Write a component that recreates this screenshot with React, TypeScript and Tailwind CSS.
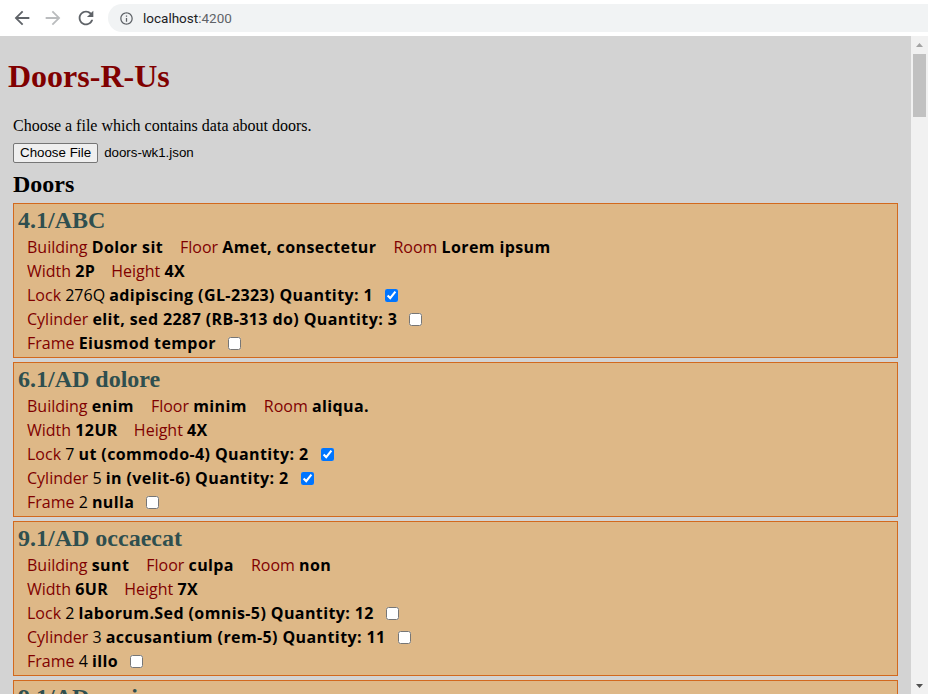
import React from "react";

// Datos de ejemplo de puertas
type Part = { num: string; name: string; code?: string; qty?: number; ok: boolean };
type Door = {
  id: string;
  building: string;
  floor: string;
  room: string;
  width: string;
  height: string;
  lock: Part;
  cylinder: Part;
  frame: Part;
};

const doors: Door[] = [
  {
    id: "4.1/ABC",
    building: "Dolor sit",
    floor: "Amet, consectetur",
    room: "Lorem ipsum",
    width: "2P",
    height: "4X",
    lock: { num: "276Q", name: "adipiscing", code: "GL-2323", qty: 1, ok: true },
    cylinder: { num: "", name: "elit, sed 2287", code: "RB-313 do", qty: 3, ok: false },
    frame: { num: "", name: "Eiusmod tempor", ok: false },
  },
  {
    id: "6.1/AD dolore",
    building: "enim",
    floor: "minim",
    room: "aliqua.",
    width: "12UR",
    height: "4X",
    lock: { num: "7", name: "ut", code: "commodo-4", qty: 2, ok: true },
    cylinder: { num: "5", name: "in", code: "velit-6", qty: 2, ok: true },
    frame: { num: "2", name: "nulla", ok: false },
  },
  {
    id: "9.1/AD occaecat",
    building: "sunt",
    floor: "culpa",
    room: "non",
    width: "6UR",
    height: "7X",
    lock: { num: "2", name: "laborum.Sed", code: "omnis-5", qty: 12, ok: false },
    cylinder: { num: "3", name: "accusantium", code: "rem-5", qty: 11, ok: false },
    frame: { num: "4", name: "illo", ok: false },
  },
  {
    id: "9.1/AD veniam",
    building: "quis",
    floor: "nostrud",
    room: "exercitation",
    width: "3P",
    height: "5X",
    lock: { num: "1", name: "ullamco", code: "GL-11", qty: 4, ok: false },
    cylinder: { num: "2", name: "laboris", code: "RB-2", qty: 4, ok: false },
    frame: { num: "1", name: "nisi", ok: false },
  },
];

function Label({ children }: { children: React.ReactNode }) {
  return <span className="text-[#800000]">{children}</span>;
}

function Val({ children }: { children: React.ReactNode }) {
  return <b className="tracking-[0.4px]">{children}</b>;
}

function PartRow({ label, part }: { label: string; part: Part }) {
  return (
    <div className="leading-[24px] whitespace-nowrap">
      <Label>{label}</Label> {part.num && <span>{part.num} </span>}
      <Val>
        {part.name}
        {part.code && ` (${part.code}) Quantity: ${part.qty}`}
      </Val>
      <input
        type="checkbox"
        defaultChecked={part.ok}
        className="ml-[12px] w-[13px] h-[13px] align-[-1px]"
      />
    </div>
  );
}

function DoorCard({ door }: { door: Door }) {
  return (
    <div className="border border-[#d2691e] bg-[#deb887] px-[4px] pt-[2px] pb-[2px] mb-[4px]">
      <h3 className="font-['Liberation_Serif',serif] font-bold text-[24px] leading-[28px] text-[#2f4f4f]">
        {door.id}
      </h3>
      <div className="mt-[1px] pl-[9px] text-[16px] text-black font-['Open_Sans','Noto_Sans',sans-serif]">
        <div className="flex gap-x-[17px] leading-[24px] whitespace-nowrap">
          <span>
            <Label>Building</Label> <Val>{door.building}</Val>
          </span>
          <span>
            <Label>Floor</Label> <Val>{door.floor}</Val>
          </span>
          <span>
            <Label>Room</Label> <Val>{door.room}</Val>
          </span>
        </div>
        <div className="flex gap-x-[16px] leading-[24px] whitespace-nowrap">
          <span>
            <Label>Width</Label> <Val>{door.width}</Val>
          </span>
          <span>
            <Label>Height</Label> <Val>{door.height}</Val>
          </span>
        </div>
        <PartRow label="Lock" part={door.lock} />
        <PartRow label="Cylinder" part={door.cylinder} />
        <PartRow label="Frame" part={door.frame} />
      </div>
    </div>
  );
}

function BrowserBar() {
  return (
    <div className="h-[36px] bg-white flex items-start pt-[4px] pl-[11px]">
      <div className="h-[28px] flex items-center">
        <svg width="22" height="22" viewBox="0 0 24 24" className="fill-[#5f6368]">
          <path d="M20 11H7.83l5.59-5.59L12 4l-8 8 8 8 1.41-1.41L7.83 13H20v-2z" />
        </svg>
        <svg width="22" height="22" viewBox="0 0 24 24" className="fill-[#babcbe] ml-[9px]">
          <path d="M12 4l-1.41 1.41L16.17 11H4v2h12.17l-5.58 5.59L12 20l8-8z" />
        </svg>
        <svg width="22" height="22" viewBox="0 0 24 24" className="fill-[#5f6368] ml-[11px]">
          <path d="M17.65 6.35C16.2 4.9 14.21 4 12 4c-4.42 0-7.99 3.58-7.99 8s3.57 8 7.99 8c3.73 0 6.84-2.55 7.73-6h-2.08c-.82 2.33-3.04 4-5.65 4-3.31 0-6-2.69-6-6s2.69-6 6-6c1.66 0 3.14.69 4.22 1.78L13 11h7V4l-2.35 2.35z" />
        </svg>
      </div>
      <div className="ml-[11px] flex-1 h-[28px] rounded-l-full bg-[#f1f3f4] flex items-center pl-[11px]">
        <svg width="15" height="15" viewBox="0 0 24 24" className="fill-[#5f6368]">
          <path d="M11 7h2v2h-2zm0 4h2v6h-2zm1-9C6.48 2 2 6.48 2 12s4.48 10 10 10 10-4.48 10-10S17.52 2 12 2zm0 18c-4.41 0-8-3.59-8-8s3.59-8 8-8 8 3.59 8 8-3.59 8-8 8z" />
        </svg>
        <span className="ml-[9px] text-[13.5px] font-['Roboto',sans-serif] text-[#202124]">
          localhost<span className="text-[#5f6368]">:4200</span>
        </span>
      </div>
    </div>
  );
}

function Scrollbar() {
  return (
    <div className="w-[17px] bg-[#f1f1f1] flex flex-col">
      <div className="h-[17px] flex items-center justify-center">
        <svg width="7" height="4" viewBox="0 0 7 4" className="fill-[#a3a3a3]">
          <polygon points="3.5,0 7,4 0,4" />
        </svg>
      </div>
      <div className="mx-[2px] mt-[1px] h-[63px] bg-[#c1c1c1]" />
      <div className="flex-1" />
      <div className="h-[17px] flex items-center justify-center">
        <svg width="7" height="4" viewBox="0 0 7 4" className="fill-[#505050]">
          <polygon points="0,0 7,0 3.5,4" />
        </svg>
      </div>
    </div>
  );
}

export default function App() {
  return (
    <div className="w-[928px] h-[694px] overflow-hidden flex flex-col">
      <BrowserBar />
      <div className="flex-1 min-h-0 flex">
        <main className="flex-1 min-w-0 overflow-hidden bg-[#d3d3d3] px-[8px]">
          <h1 className="mt-[22px] font-['Liberation_Serif',serif] font-bold text-[32px] leading-[37px] text-[#800000]">
            Doors-R-Us
          </h1>
          <div className="mx-[5px]">
            <p className="mt-[22px] font-['Liberation_Serif',serif] text-[16px] leading-[18px] text-black">
              Choose a file which contains data about doors.
            </p>
            <div className="mt-[8px] flex items-center font-['Liberation_Sans',sans-serif] text-[13.33px]">
              <button className="h-[20px] px-[6px] bg-[#efefef] border border-[#767676] rounded-[2px] leading-[16px] text-black">
                Choose File
              </button>
              <span className="ml-[6px] text-black">doors-wk1.json</span>
            </div>
            <h2 className="mt-[7px] mb-[5px] font-['Liberation_Serif',serif] font-bold text-[24px] leading-[28px] text-black">
              Doors
            </h2>
            {doors.map((d) => (
              <DoorCard key={d.id} door={d} />
            ))}
          </div>
        </main>
        <Scrollbar />
      </div>
    </div>
  );
}
